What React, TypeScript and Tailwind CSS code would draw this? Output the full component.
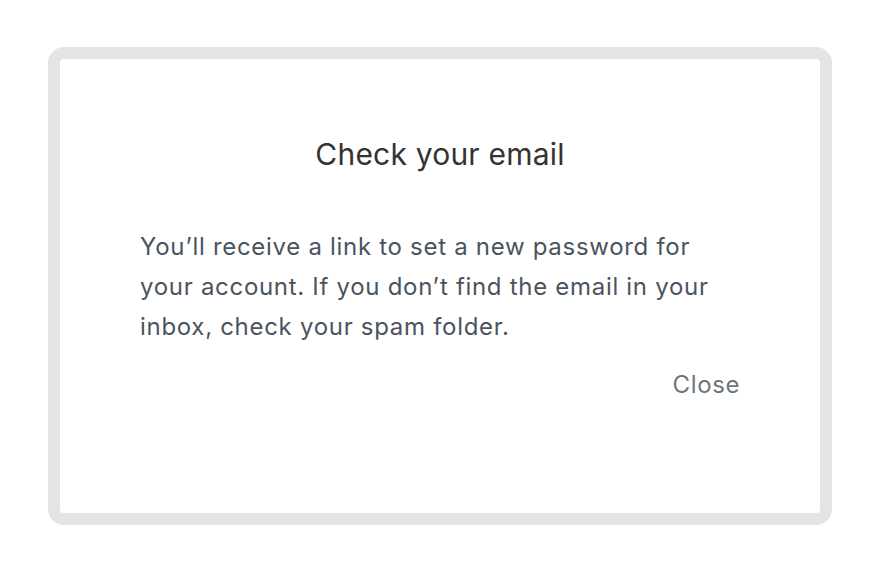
export default function App() {
  return (
    <div className="w-full h-[582px] bg-white pt-[47px] pl-[48px]" style={{ fontFamily: "Inter, 'Noto Sans', sans-serif" }}>
      {/* Dialog frame */}
      <div className="w-[784px] h-[478px] bg-[#e4e4e4] rounded-2xl p-3">
        <div className="h-full bg-white rounded px-[80px] pt-[77px]">
          <h1 className="text-center text-[30px] leading-[36px] tracking-[0.2px] text-[#333333]">Check your email</h1>
          <p className="mt-[55px] text-[24px] leading-[40px] tracking-[0.7px] text-[#4a545e]">
            You’ll receive a link to set a new password for your account. If you don’t find the email in your inbox, check your spam folder.
          </p>
          <div className="mt-[18px] flex justify-end">
            <button className="text-[24px] leading-[40px] tracking-[0.6px] text-[#6b7680]">Close</button>
          </div>
        </div>
      </div>
    </div>
  );
}
